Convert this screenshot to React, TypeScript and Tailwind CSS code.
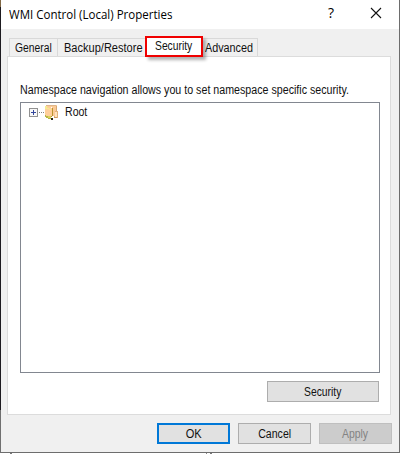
import React from "react";

const button =
  "flex h-[21px] items-center justify-center border border-[#adadad] bg-[#e1e1e1] whitespace-nowrap";

function FolderIcon() {
  return (
    <svg width="14" height="17" viewBox="0 0 14 17" shapeRendering="crispEdges">
      <path d="M9 7h4v7H9z" fill="#e0b07a" />
      <path d="M10 8h2v5h-2z" fill="#ffe3bd" />
      <path d="M1 1h11v6h-2v5H7V3H1z" fill="#fbca96" />
      <path d="M1 1h10v1H1z" fill="#dfb68a" />
      <path d="M11 2h1v5h-1z" fill="#d6a873" />
      <path d="M0 2h1l6 2v8l-4 1-3-1z" fill="#ffcf9b" />
      <path d="M0 2h2v2h2v1h2v1H4V5H0z" fill="#f5ec91" />
      <path d="M7 4h1v8H7v1H6v-1h1z" fill="#b9952f" />
      <path d="M0 11h1v1h2v1h3v2H3v-1H1v-1H0z" fill="#b9b642" />
      <path d="M3 12h3v2H3z" fill="#d7d25c" />
      <path d="M6 14h2v2H6z" fill="#292411" />
      <path d="M9 13h3v1H9z" fill="#cf9b60" />
    </svg>
  );
}

export default function App() {
  return (
    <div className="flex h-[454px] w-[400px] overflow-hidden bg-white font-['Liberation_Sans',Arial,sans-serif] text-[12px] leading-[14px] text-[#111]">
      <div className="flex w-px shrink-0 flex-col">
        <div className="h-[7px] bg-[#806845]" />
        <div className="h-[403px] bg-[#1d1b20]" />
        <div className="h-[43px] bg-[#707070]" />
      </div>
      <div className="flex w-[399px] flex-col">
        <div className="flex h-[453px] flex-col border-r border-b border-[#6d6d6d] bg-[#f0f0f0]">
          <header className="flex h-[29px] shrink-0 items-center bg-white pl-2 font-['Open_Sans','Noto_Sans',sans-serif] text-black">
            <span className="w-[164px] origin-left scale-x-[0.96] text-[12px] whitespace-nowrap">WMI Control (Local) Properties</span>
            <span className="-mt-1 ml-[154px] w-[8px] text-center text-[14px]">?</span>
            <svg className="-mt-[3px] ml-[35px]" width="12" height="12" viewBox="0 0 12 12">
              <path d="M1 1l10 10M11 1L1 11" stroke="#111" strokeWidth="1.1" />
            </svg>
          </header>

          <div className="flex h-[27px] shrink-0 items-end pl-2">
            <div className="flex h-[18px] w-[49px] items-center border-x border-t border-[#d9d9d9] pl-[5px] whitespace-nowrap">
              <span className="origin-left scale-x-[0.86]">General</span>
            </div>
            <div className="flex h-[18px] w-[87px] items-center border-t border-[#d9d9d9] pl-[6px] whitespace-nowrap">
              <span className="origin-left scale-x-[0.92]">Backup/Restore</span>
            </div>
            <div className="relative z-10 -mb-px flex h-[21px] w-[58px] items-center border-2 border-[#f00000] bg-white pl-[8px] whitespace-nowrap shadow-[3px_3px_3px_rgba(0,0,0,0.3)]">
              <span className="-mt-px origin-left scale-x-[0.86]">Security</span>
            </div>
            <div className="flex h-[18px] w-[55px] items-center border-t border-r border-[#d9d9d9] pl-[2px] whitespace-nowrap">
              <span className="origin-left scale-x-[0.9]">Advanced</span>
            </div>
          </div>

          <main className="ml-[6px] flex h-[359px] w-[384px] shrink-0 flex-col border border-[#dcdcdc] bg-white pl-3">
            <p className="mt-[26px] h-[14px] w-max origin-left scale-x-[0.889] whitespace-nowrap">
              Namespace navigation allows you to set namespace specific security.
            </p>
            <div className="mt-[5px] flex h-[271px] w-[360px] shrink-0 items-start border border-[#828790] pl-[8px]">
              <div className="flex h-[18px] items-center">
                <svg width="16" height="9" viewBox="0 0 16 9" shapeRendering="crispEdges">
                  <rect x=".5" y=".5" width="8" height="8" fill="#f8f8f8" stroke="#919191" />
                  <path d="M2 4.5h5M4.5 2v5" stroke="#34489c" />
                  <path d="M10 4.5h6" stroke="#808080" strokeDasharray="1 1" />
                </svg>
                <FolderIcon />
                <span className="ml-[6px] origin-left scale-x-[0.88]">Root</span>
              </div>
            </div>
            <button className={`${button} mt-2 ml-[247px] w-[112px]`}>
              <span className="scale-x-[0.86]">Security</span>
            </button>
          </main>

          <footer className="mt-2 flex gap-2 pl-[156px]">
            <button className="flex h-[21px] w-[73px] items-center justify-center border-2 border-[#0078d7] bg-[#e1e1e1]">
              <span className="scale-x-[0.92]">OK</span>
            </button>
            <button className={`${button} w-[73px]`}>
              <span className="scale-x-[0.88]">Cancel</span>
            </button>
            <button disabled className="flex h-[21px] w-[73px] items-center justify-center border border-[#bfbfbf] bg-[#cccccc] text-[#838383]">
              <span className="scale-x-[0.87]">Apply</span>
            </button>
          </footer>
        </div>
        <div className="flex h-px">
          <div className="ml-[9px] h-px w-[2px] bg-[#777]" />
          <div className="ml-[194px] h-px w-px bg-[#888]" />
          <div className="ml-[3px] h-px w-[2px] bg-[#777]" />
        </div>
      </div>
    </div>
  );
}
